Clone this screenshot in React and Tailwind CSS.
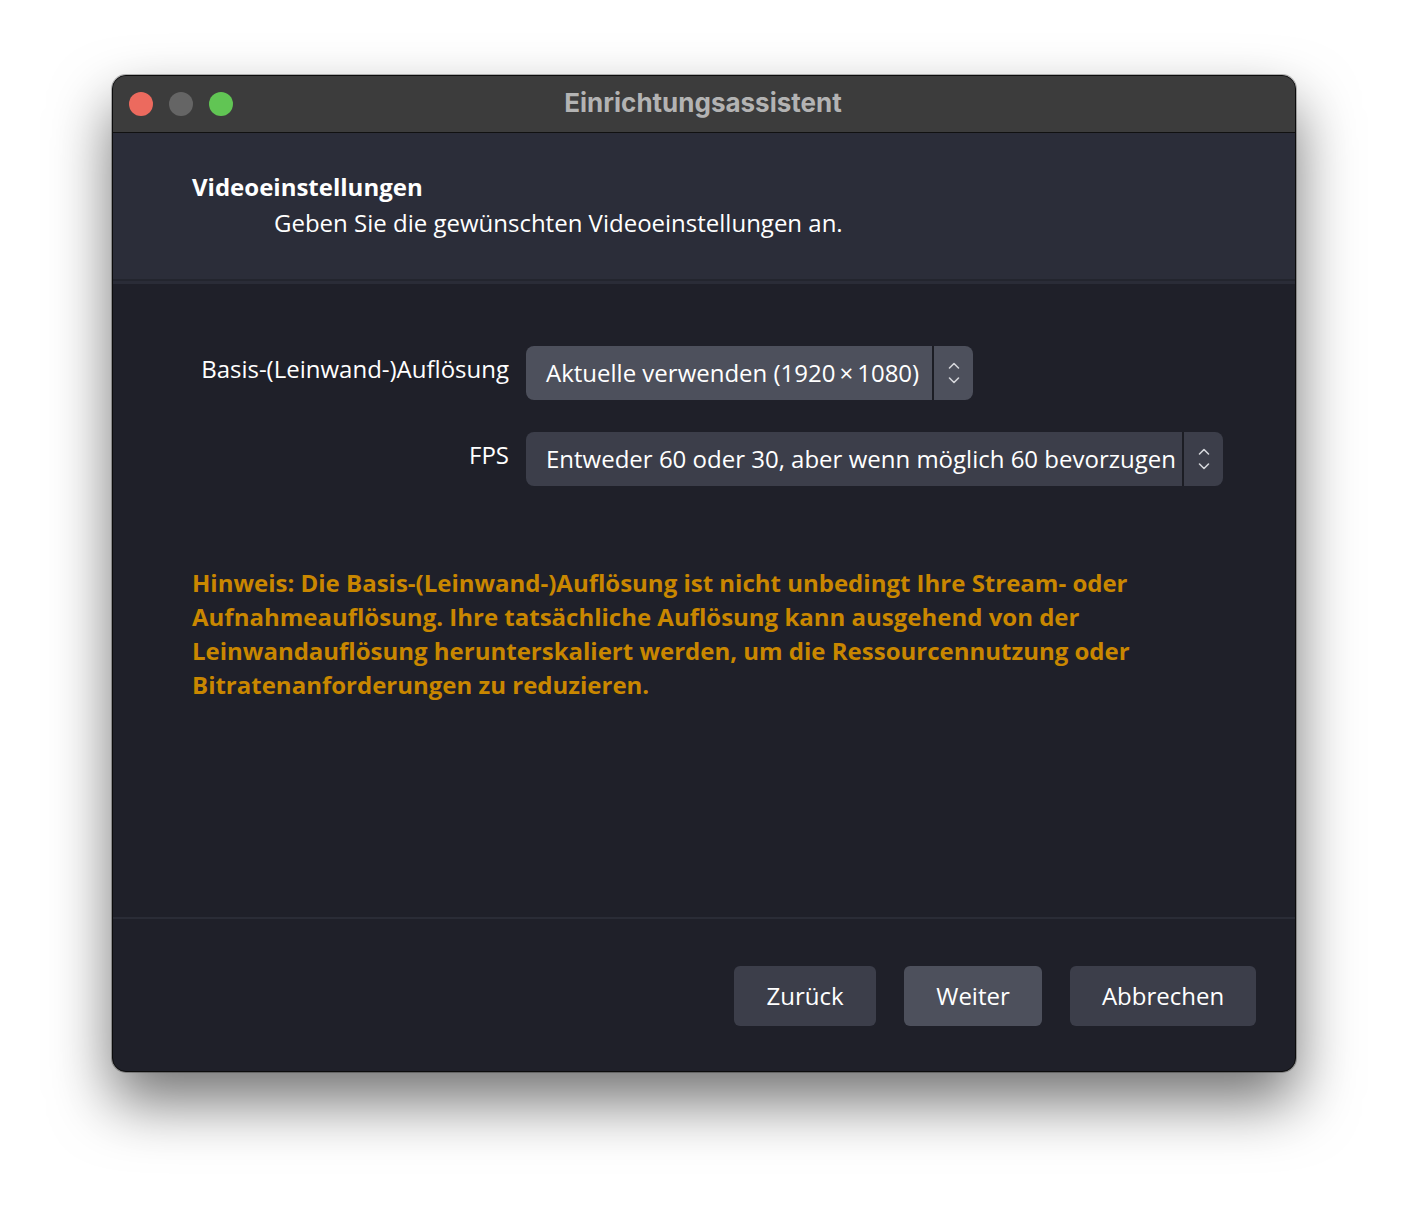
import React from "react";

function Stepper() {
  return (
    <svg width="14" height="26" viewBox="0 0 14 26" fill="none" stroke="#d4d5da" strokeWidth="1.6" strokeLinecap="round" strokeLinejoin="round">
      <path d="M2.5 8 L7 3.5 L11.5 8" />
      <path d="M2.5 18 L7 22.5 L11.5 18" />
    </svg>
  );
}

function Select({ text, bg, width }) {
  return (
    <div className={`flex h-[54px] rounded-[8px] ${bg} ${width}`}>
      <div className="flex flex-1 items-center pl-[20px] text-[24px] text-white whitespace-nowrap">{text}</div>
      <div className="w-[2px] bg-[#1c1d24]" />
      <div className="flex w-[39px] items-center justify-center">
        <Stepper />
      </div>
    </div>
  );
}

export default function App() {
  return (
    <div className="min-h-[1220px] w-[1408px] bg-white pt-[75px] pl-[112px]" style={{ fontFamily: '"Open Sans", "Noto Sans", sans-serif' }}>
      <div className="flex h-[997px] w-[1184px] flex-col overflow-hidden rounded-[14px] border border-[#0c0c0c] bg-[#1f2029] shadow-[0_30px_60px_rgba(0,0,0,0.55),0_0_0_1px_rgba(120,120,120,0.5)]">
        {/* title bar */}
        <div className="relative flex h-[57px] shrink-0 items-center border-b border-[#111111] bg-[#3c3c3c] pl-[16px]">
          <div className="flex gap-[16px]">
            <div className="h-[24px] w-[24px] rounded-full bg-[#ec6a5e]" />
            <div className="h-[24px] w-[24px] rounded-full bg-[#656565]" />
            <div className="h-[24px] w-[24px] rounded-full bg-[#61c554]" />
          </div>
          <div className="absolute inset-0 flex items-center justify-center pb-[3px] pr-[2px] text-[26px] font-bold text-[#b3b3b3]" style={{ fontFamily: 'Inter, "Liberation Sans", sans-serif' }}>
            Einrichtungsassistent
          </div>
        </div>
        {/* header */}
        <div className="flex h-[146px] shrink-0 flex-col bg-[#2b2d39] pl-[79px] pt-[38px]">
          <div className="text-[24px] font-bold leading-[32px] text-white">Videoeinstellungen</div>
          <div className="pl-[82px] pt-[4px] text-[24px] leading-[32px] text-white">Geben Sie die gewünschten Videoeinstellungen an.</div>
        </div>
        <div className="h-[2px] shrink-0 bg-[#23252e]" />
        <div className="h-[3px] shrink-0 bg-[#2a2c37]" />
        {/* body */}
        <div className="flex flex-1 flex-col pt-[62px]">
          <div className="grid grid-cols-[396px_auto] gap-x-[17px] gap-y-[32px]">
            <div className="flex items-center justify-end pb-[8px] text-[24px] text-white">Basis-(Leinwand-)Auflösung</div>
            <div className="flex">
              <Select text={"Aktuelle verwenden (1920\u2009×\u20091080)"} bg="bg-[#4d505c]" width="w-[447px]" />
            </div>
            <div className="flex items-center justify-end pb-[8px] text-[24px] text-white">FPS</div>
            <div className="flex">
              <Select text="Entweder 60 oder 30, aber wenn möglich 60 bevorzugen" bg="bg-[#3c3e4a]" width="w-[697px]" />
            </div>
          </div>
          <div className="pl-[79px] pr-[140px] pt-[80px] text-[24px] font-bold leading-[34px] text-[#c98700]">
            Hinweis: Die Basis-(Leinwand-)Auflösung ist nicht unbedingt Ihre Stream- oder Aufnahmeauflösung. Ihre tatsächliche Auflösung kann ausgehend von der Leinwandauflösung herunterskaliert werden, um die Ressourcennutzung oder Bitratenanforderungen zu reduzieren.
          </div>
        </div>
        {/* footer */}
        <div className="h-[2px] shrink-0 bg-[#2a2c36]" />
        <div className="flex h-[152px] shrink-0 justify-end gap-[28px] pr-[39px] pt-[47px]">
          <button className="h-[60px] w-[142px] rounded-[6px] bg-[#3c3e4a] text-[24px] text-white">Zurück</button>
          <button className="h-[60px] w-[138px] rounded-[6px] bg-[#4d505c] text-[24px] text-white">Weiter</button>
          <button className="h-[60px] w-[186px] rounded-[6px] bg-[#3c3e4a] text-[24px] text-white">Abbrechen</button>
        </div>
      </div>
    </div>
  );
}
